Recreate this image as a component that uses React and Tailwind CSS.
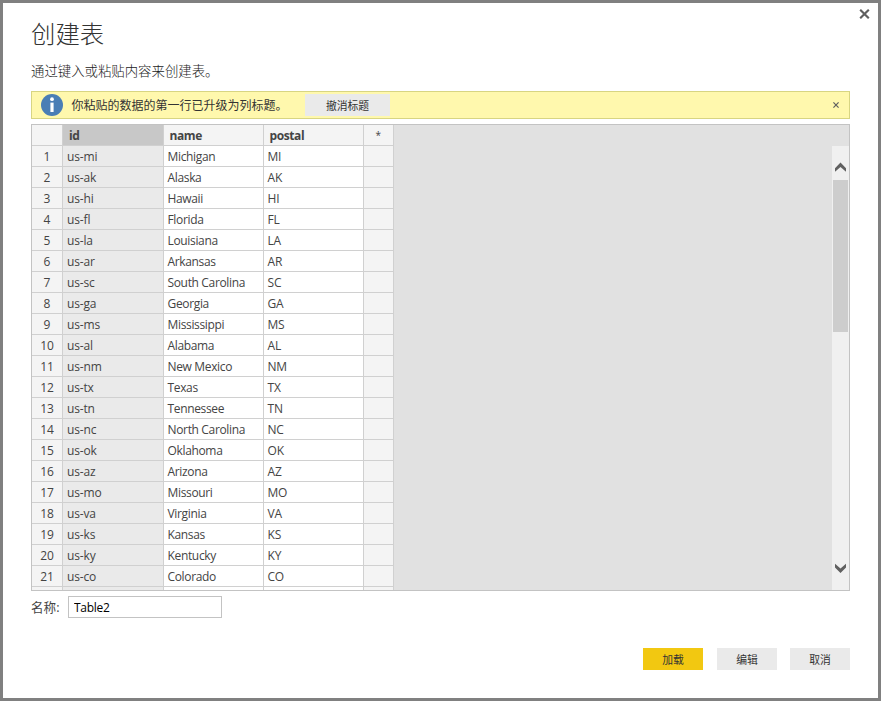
const rows = [
  ['us-mi', 'Michigan', 'MI'],
  ['us-ak', 'Alaska', 'AK'],
  ['us-hi', 'Hawaii', 'HI'],
  ['us-fl', 'Florida', 'FL'],
  ['us-la', 'Louisiana', 'LA'],
  ['us-ar', 'Arkansas', 'AR'],
  ['us-sc', 'South Carolina', 'SC'],
  ['us-ga', 'Georgia', 'GA'],
  ['us-ms', 'Mississippi', 'MS'],
  ['us-al', 'Alabama', 'AL'],
  ['us-nm', 'New Mexico', 'NM'],
  ['us-tx', 'Texas', 'TX'],
  ['us-tn', 'Tennessee', 'TN'],
  ['us-nc', 'North Carolina', 'NC'],
  ['us-ok', 'Oklahoma', 'OK'],
  ['us-az', 'Arizona', 'AZ'],
  ['us-mo', 'Missouri', 'MO'],
  ['us-va', 'Virginia', 'VA'],
  ['us-ks', 'Kansas', 'KS'],
  ['us-ky', 'Kentucky', 'KY'],
  ['us-co', 'Colorado', 'CO'],
];

const grid = 'grid grid-cols-[31px_101px_100px_100px_30px] shrink-0';
const cell = 'border-r border-b border-[#d0d0d0] whitespace-nowrap overflow-hidden';

function Row({ index, values }) {
  return (
    <div className={`${grid} h-[21px] leading-[22px]`}>
      <div className={`${cell} bg-[#f4f4f4] text-center`}>{index}</div>
      <div className={`${cell} bg-[#eaeaea] pl-1 tracking-[-0.15px]`}>{values[0]}</div>
      <div className={`${cell} bg-white pl-[3.5px] tracking-[-0.34px]`}>{values[1]}</div>
      <div className={`${cell} bg-white pl-[3.5px] tracking-[-0.2px]`}>{values[2]}</div>
      <div className={`${cell} bg-[#f4f4f4]`} />
    </div>
  );
}

function Cross({ className, width }) {
  return (
    <svg className={className} viewBox="0 0 10 10" fill="none" stroke="#5f5f5f" strokeWidth={width}>
      <path d="M0.7 0.7 9.3 9.3M9.3 0.7 0.7 9.3" />
    </svg>
  );
}

function Chevron({ d }) {
  return (
    <svg className="h-[10px] w-[11px] shrink-0" viewBox="0 0 11 10" fill="#606060">
      <path d={d} />
    </svg>
  );
}

export default function App() {
  return (
    <div className="flex h-[701px] w-[881px] flex-col border-[3px] border-[#808080] bg-white font-['Open_Sans','Noto_Sans_CJK_SC',sans-serif] text-xs text-[#444]">
      <div className="flex h-[52px] shrink-0 justify-between pl-7">
        <h1 className="pt-[11px] font-['Noto_Sans_CJK_SC',sans-serif] text-[24.4px] leading-[38px] font-light text-[#333]">创建表</h1>
        <Cross className="mt-[6px] mr-[8.5px] h-[10px] w-[11px]" width="2.1" />
      </div>
      <p className="h-9 shrink-0 pt-[5px] pl-7 font-['Noto_Sans_CJK_SC',sans-serif] text-[13.4px] leading-[20px] font-light text-[#222]">通过键入或粘贴内容来创建表。</p>

      <div className="ml-7 flex h-7 w-[819px] shrink-0 items-center border border-[#d8d582] bg-[#fff8ad] font-['Noto_Sans_CJK_SC',sans-serif]">
        <svg className="ml-[9px] size-[22px]" viewBox="0 0 22 22">
          <circle cx="11" cy="11" r="11" fill="#4a7eb5" />
          <circle cx="11" cy="5.2" r="1.9" fill="#fff" />
          <path d="M9.4 8.6h3.2V18H9.4z" fill="#fff" />
        </svg>
        <span className="ml-[8.5px] w-[233.5px] whitespace-nowrap text-[#333]">你粘贴的数据的第一行已升级为列标题。</span>
        <button className="h-[22px] w-[85px] bg-[#eaeaea] text-[10.8px] text-[#333]">撤消标题</button>
        <Cross className="mr-[10px] ml-auto size-[6px]" width="2" />
      </div>

      <div className="mt-[5px] ml-7 flex h-[467px] w-[819px] shrink-0 justify-between overflow-hidden border border-[#c3c3c3] bg-[#e1e1e1]">
        <div className="flex flex-col overflow-hidden">
          <div className={`${grid} h-[21px] leading-[22px] font-bold tracking-[-0.4px]`}>
            <div className={`${cell} bg-[#f4f4f4]`} />
            <div className={`${cell} bg-[#c8c8c8] pl-[6px]`}>id</div>
            <div className={`${cell} bg-[#f4f4f4] pl-[5.5px]`}>name</div>
            <div className={`${cell} bg-[#f4f4f4] pl-[5.5px]`}>postal</div>
            <div className={`${cell} bg-[#f4f4f4] pr-px text-center text-[10px] leading-[20px] font-normal`}>*</div>
          </div>
          {rows.map((values, i) => (
            <Row key={values[0]} index={i + 1} values={values} />
          ))}
          <Row index="" values={['', '', '']} />
        </div>
        <div className="mt-[21px] flex w-[17px] flex-col items-center bg-[#f0f0f0] pt-4">
          <Chevron d="M5.5 0.6 11 6.2V9.8L5.5 5 0 9.8V6.2z" />
          <div className="mt-2 h-[152px] w-[15px] shrink-0 bg-[#cdcdcd]" />
          <div className="mt-[231px] flex">
            <Chevron d="M5.5 10 0 4.4V0.8L5.5 5.6 11 0.8V4.4z" />
          </div>
        </div>
      </div>

      <div className="mt-[5px] ml-7 flex h-[22px] shrink-0 items-center">
        <label className="w-[37px] pt-[2px] text-[12.6px] whitespace-nowrap">名称:</label>
        <input className="h-[22px] w-[154px] border border-[#c3c3c3] pt-px pl-[5px] tracking-[-0.3px] text-black outline-none" defaultValue="Table2" />
      </div>

      <div className="mt-[30px] flex h-[22px] w-[847px] shrink-0 justify-end font-['Noto_Sans_CJK_SC',sans-serif] text-[10.8px] text-[#333]">
        <button className="w-[60px] bg-[#f2c811]">加载</button>
        <button className="ml-[14px] w-[60px] bg-[#eaeaea]">编辑</button>
        <button className="ml-[13px] w-[60px] bg-[#eaeaea]">取消</button>
      </div>
    </div>
  );
}
